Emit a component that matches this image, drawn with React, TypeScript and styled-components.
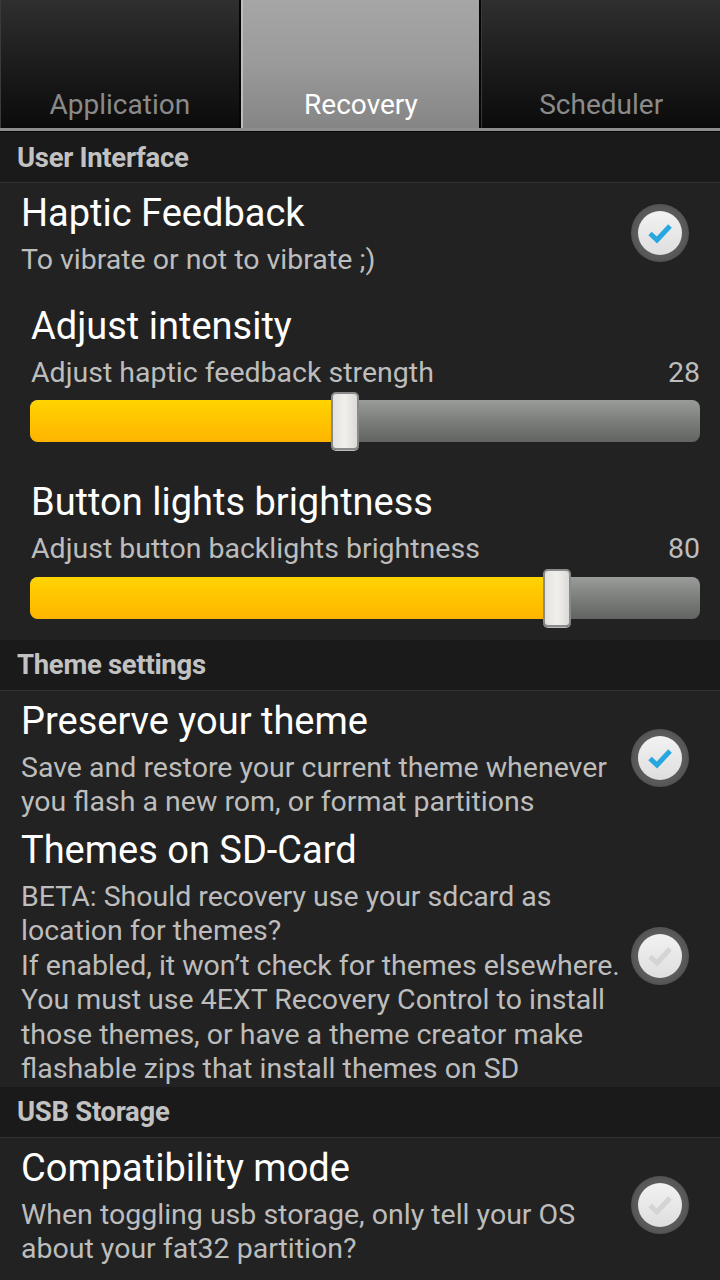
import React from "react";
import styled, { createGlobalStyle } from "styled-components";

const GlobalStyle = createGlobalStyle`
  html, body {
    margin: 0;
    padding: 0;
    background: #222222;
  }
  body {
    font-family: Roboto, "Noto Sans", "DejaVu Sans", sans-serif;
    -webkit-font-smoothing: antialiased;
  }
`;

const tabs = ["Application", "Recovery", "Scheduler"];

export default function App() {
  return (
    <>
      <GlobalStyle />
      <Screen>
        <TabBar>
          {tabs.map((t) => (
            <Tab key={t} active={t === "Recovery"}>
              {t}
            </Tab>
          ))}
        </TabBar>

        <SectionHeader>User Interface</SectionHeader>
        <PrefRow>
          <PrefText>
            <Title>Haptic Feedback</Title>
            <Summary>To vibrate or not to vibrate ;)</Summary>
          </PrefText>
          <CheckCircle checked />
        </PrefRow>
        <SliderPref
          title="Adjust intensity"
          summary="Adjust haptic feedback strength"
          value={28}
          percent={47}
        />
        <SliderPref
          title="Button lights brightness"
          summary="Adjust button backlights brightness"
          value={80}
          percent={78.6}
          last
        />

        <SectionHeader>Theme settings</SectionHeader>
        <PrefRow>
          <PrefText>
            <Title>Preserve your theme</Title>
            <Summary>
              Save and restore your current theme whenever you flash a new rom, or format partitions
            </Summary>
          </PrefText>
          <CheckCircle checked />
        </PrefRow>
        <PrefRow>
          <PrefText>
            <Title>Themes on SD-Card</Title>
            <Summary>
              BETA: Should recovery use your sdcard as location for themes?
              <br />
              If enabled, it won’t check for themes elsewhere. You must use 4EXT Recovery Control to
              install those themes, or have a theme creator make flashable zips that install themes
              on SD
            </Summary>
          </PrefText>
          <CheckCircle />
        </PrefRow>

        <SectionHeader>USB Storage</SectionHeader>
        <PrefRow>
          <PrefText>
            <Title>Compatibility mode</Title>
            <Summary>When toggling usb storage, only tell your OS about your fat32 partition?</Summary>
          </PrefText>
          <CheckCircle />
        </PrefRow>
      </Screen>
    </>
  );
}

function CheckCircle({ checked = false }: { checked?: boolean }) {
  return (
    <CheckWrap>
      <CheckRing>
        <CheckFace>
          <svg width="30" height="30" viewBox="0 0 30 30">
            <path
              d="M5 15.5 L12 22 L25 8"
              fill="none"
              stroke={checked ? "#27a7df" : "#d4d4d4"}
              strokeWidth="5"
              strokeLinecap="butt"
              strokeLinejoin="miter"
            />
          </svg>
        </CheckFace>
      </CheckRing>
    </CheckWrap>
  );
}

interface ISliderPref {
  title: string;
  summary: string;
  value: number;
  percent: number;
  last?: boolean;
}

function SliderPref({ title, summary, value, percent, last }: ISliderPref) {
  return (
    <SliderBlock last={last}>
      <Title>{title}</Title>
      <SummaryLine>
        <span>{summary}</span>
        <span>{value}</span>
      </SummaryLine>
      <Track>
        <Fill style={{ width: `${percent}%` }} />
        <Thumb style={{ left: `calc(${percent}% - 14px)` }} />
      </Track>
    </SliderBlock>
  );
}

const Screen = styled.div`
  width: 720px;
  min-height: 1280px;
  background: #222222;
  overflow: hidden;
`;

const TabBar = styled.div`
  display: grid;
  grid-template-columns: repeat(3, 1fr);
  gap: 2px;
  height: 128px;
  background: #050505;
  border-bottom: 3px solid #8e8e8e;
  box-shadow: 0 1px 0 #0a0a0a;
  margin-bottom: 1px;
`;

const Tab = styled.div<{ active?: boolean }>`
  display: flex;
  align-items: flex-end;
  justify-content: center;
  padding-bottom: 5px;
  font-size: 28px;
  line-height: 36px;
  color: ${(p) => (p.active ? "#ffffff" : "#8a8a8a")};
  background: ${(p) =>
    p.active
      ? "linear-gradient(#a6a6a6, #9a9a9a 50%, #858585)"
      : "linear-gradient(#2f2f2f, #1c1c1c 50%, #0b0b0b)"};
  border-left: ${(p) => (p.active ? "2px solid #bdbdbd" : "1px solid #3a3a3a")};
`;

const SectionHeader = styled.div`
  height: 50px;
  display: flex;
  align-items: center;
  padding-left: 17px;
  background: #1a1a1a;
  border-bottom: 1px solid #333333;
  color: #c2c2c2;
  font-size: 27.5px;
  font-weight: 700;
  letter-spacing: -0.3px;
`;

const PrefRow = styled.div`
  display: flex;
  align-items: center;
  padding: 6px 31px 0 21px;
`;

const PrefText = styled.div`
  flex: 1;
  min-width: 0;
`;

const Title = styled.div`
  font-size: 38px;
  line-height: 48px;
  color: #ffffff;
`;

const Summary = styled.div`
  margin-top: 6px;
  font-size: 28.5px;
  line-height: 34.5px;
  color: #bdbdbd;
`;

const SummaryLine = styled(Summary)`
  display: flex;
  justify-content: space-between;
`;

const CheckWrap = styled.div`
  flex: 0 0 58px;
  margin-left: 4px;
  display: flex;
  align-items: center;
  justify-content: center;
`;

const CheckRing = styled.div`
  width: 58px;
  height: 58px;
  border-radius: 50%;
  background: radial-gradient(circle, #5a5a5a 60%, #3e3e3e 100%);
  display: flex;
  align-items: center;
  justify-content: center;
`;

const CheckFace = styled.div`
  width: 44px;
  height: 44px;
  border-radius: 50%;
  background: linear-gradient(#f2f2f2, #dedede);
  display: flex;
  align-items: center;
  justify-content: center;
`;

const SliderBlock = styled.div<{ last?: boolean }>`
  padding: ${(p) => (p.last ? "36px 20px 21px 31px" : "24px 20px 0 31px")};
`;

const Track = styled.div`
  position: relative;
  margin-top: 10px;
  margin-left: -1px;
  height: 42px;
  border-radius: 8px;
  background: linear-gradient(#9a9c9a, #7c7e7c 50%, #626462);
`;

const Fill = styled.div`
  height: 100%;
  border-radius: 8px 0 0 8px;
  background: linear-gradient(#ffd400, #ffc400 50%, #ffb400);
`;

const Thumb = styled.div`
  position: absolute;
  top: -8px;
  width: 24px;
  height: 54px;
  border-radius: 5px;
  background: linear-gradient(90deg, #e4e2de, #f2f0ec 50%, #dcdad6);
  border: 2px solid #8a8a8a;
  box-shadow: 0 1px 0 #bbbbbb;
`;
